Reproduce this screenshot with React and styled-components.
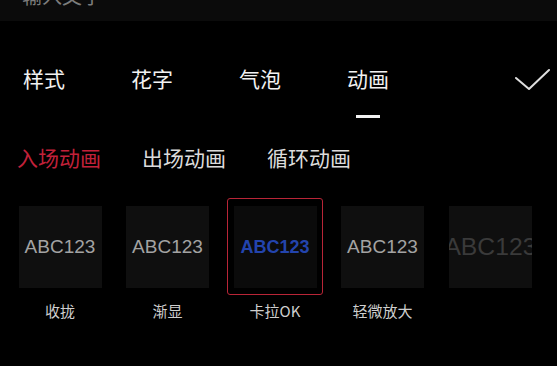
import React from "react";
import styled, { createGlobalStyle } from "styled-components";

const Global = createGlobalStyle`
  html, body { margin: 0; padding: 0; background: #000; }
  body { width: 557px; height: 366px; overflow: hidden;
    font-family: "Noto Sans CJK SC", "Noto Sans", sans-serif; }
`;

const Page = styled.div`
  width: 557px;
  height: 366px;
  background: #000;
  display: flex;
  flex-direction: column;
`;

const TopBar = styled.div`
  height: 21px;
  background: #0b0b0b;
  overflow: hidden;
  padding-left: 22px;
`;

const Placeholder = styled.div`
  margin-top: -14px;
  font-size: 20px;
  line-height: 20px;
  color: #7c7c7c;
`;

const TabRow = styled.div`
  display: flex;
  align-items: flex-start;
  padding: 46px 6px 0 23px;
  gap: 66px;
`;

const Tab = styled.div`
  display: flex;
  flex-direction: column;
  align-items: center;
`;

const TabLabel = styled.span`
  font-size: 21px;
  line-height: 22px;
  color: #f2f2f2;
`;

const Indicator = styled.div`
  width: 24px;
  height: 3px;
  margin-top: 26px;
  background: ${(p) => (p.$on ? "#f2f2f2" : "transparent")};
`;

const Check = styled.svg`
  margin-left: auto;
  margin-top: 1px;
`;

const SubRow = styled.div`
  display: flex;
  gap: 41px;
  padding-left: 17px;
  margin-top: 28px;
`;

const SubTab = styled.span`
  font-size: 21px;
  line-height: 22px;
  color: ${(p) => (p.$on ? "#c2213a" : "#dcdcdc")};
`;

const CardRow = styled.div`
  display: grid;
  grid-template-columns: repeat(5, 95px);
  column-gap: 12.5px;
  padding-left: 12.5px;
  margin-top: 30px;
`;

const Item = styled.div`
  display: flex;
  flex-direction: column;
  align-items: center;
`;

const Frame = styled.div`
  box-sizing: border-box;
  width: 96px;
  height: 97px;
  border: 1.5px solid ${(p) => (p.$on ? "#b92537" : "transparent")};
  border-radius: 3px;
  display: flex;
  align-items: center;
  justify-content: center;
`;

const Card = styled.div`
  width: 83px;
  height: 82px;
  background: ${(p) => (p.$on ? "#0b0b0b" : "#0f0f0f")};
  display: flex;
  align-items: center;
  justify-content: center;
  overflow: hidden;
`;

const Sample = styled.span`
  font-family: "Liberation Sans", Arial, sans-serif;
  font-weight: ${(p) => (p.$on ? "bold" : "normal")};
  font-size: ${(p) => (p.$on ? "18px" : "19px")};
  line-height: 20px;
  white-space: nowrap;
  color: ${(p) => p.$color};
  transform: scale(${(p) => p.$scale || 1});
`;

const Label = styled.div`
  margin-top: 7px;
  height: 18px;
  font-size: 15px;
  line-height: 18px;
  color: #cfcfcf;
`;

const tabs = ["样式", "花字", "气泡", "动画"];
const subs = ["入场动画", "出场动画", "循环动画"];
const items = [
  { label: "收拢", color: "#a3a3a3" },
  { label: "渐显", color: "#a3a3a3" },
  { label: "卡拉OK", color: "#2344ad", on: true },
  { label: "轻微放大", color: "#a3a3a3" },
  { label: "", color: "#3a3a3a", scale: 1.3 },
];

export default function App() {
  return (
    <Page>
      <Global />
      <TopBar>
        <Placeholder>输入文字</Placeholder>
      </TopBar>
      <TabRow>
        {tabs.map((t, i) => (
          <Tab key={t}>
            <TabLabel>{t}</TabLabel>
            <Indicator $on={i === 3} />
          </Tab>
        ))}
        <Check width="36" height="24" viewBox="0 0 36 24" fill="none">
          <polyline
            points="1,10 14,21 34,2"
            stroke="#dedede"
            strokeWidth="2"
            strokeLinecap="round"
            strokeLinejoin="round"
          />
        </Check>
      </TabRow>
      <SubRow>
        {subs.map((s, i) => (
          <SubTab key={s} $on={i === 0}>
            {s}
          </SubTab>
        ))}
      </SubRow>
      <CardRow>
        {items.map((it, i) => (
          <Item key={i}>
            <Frame $on={it.on}>
              <Card $on={it.on}>
                <Sample $color={it.color} $scale={it.scale} $on={it.on}>
                  ABC123
                </Sample>
              </Card>
            </Frame>
            <Label>{it.label}</Label>
          </Item>
        ))}
      </CardRow>
    </Page>
  );
}
